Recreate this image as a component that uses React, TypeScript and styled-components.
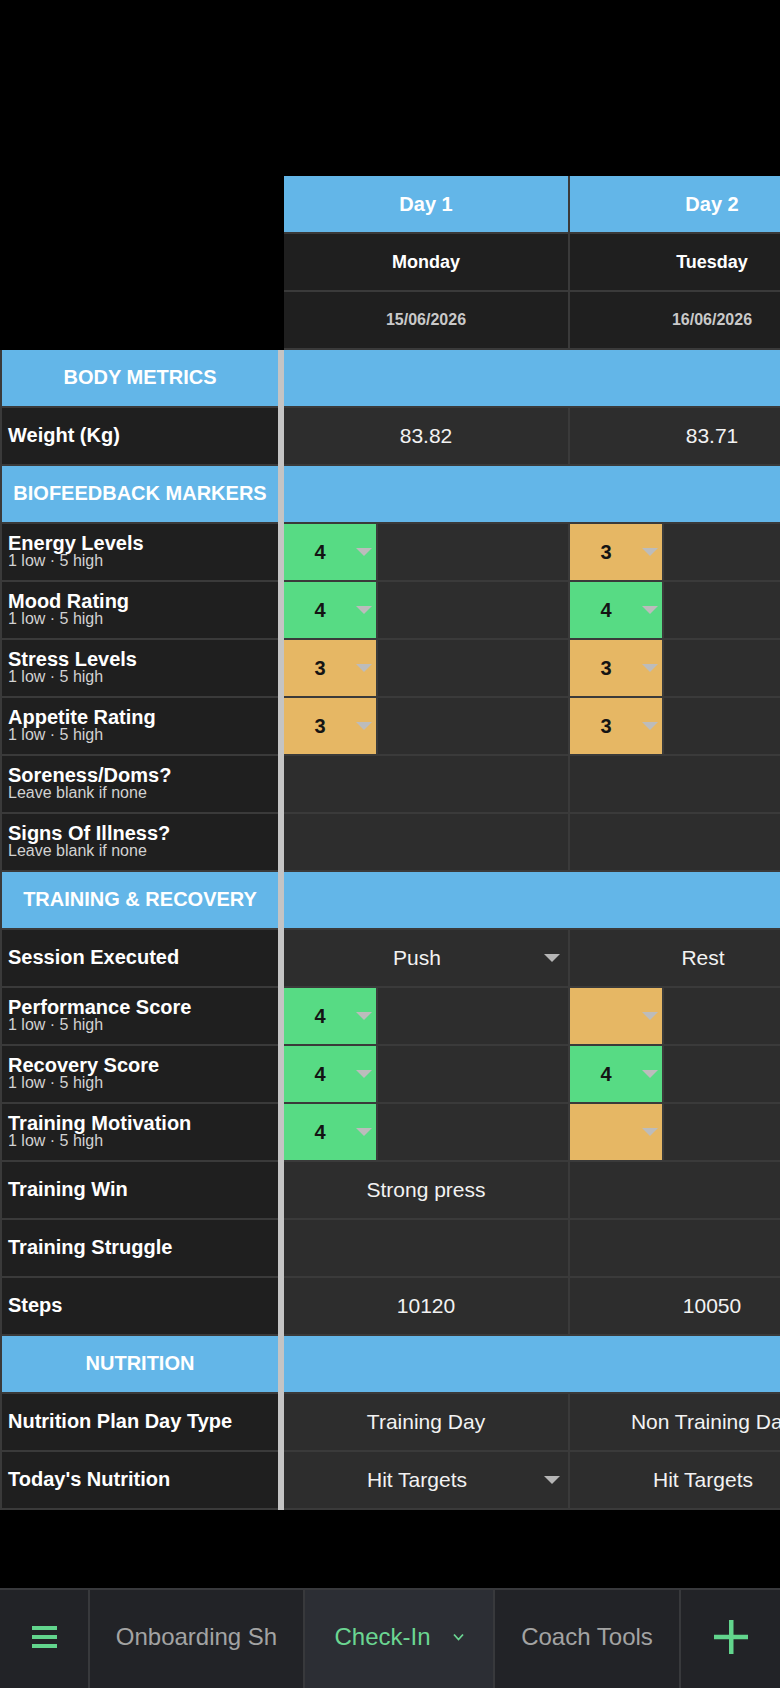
import React from "react";
import styled, { createGlobalStyle } from "styled-components";

const GlobalStyle = createGlobalStyle`
  html, body {
    margin: 0;
    padding: 0;
    background: #000;
  }
  body {
    font-family: "Liberation Sans", Arial, sans-serif;
    color: #fff;
  }
`;

const BLUE = "#63b6e8";
const LINE = "#3a3a3a";
const GREEN = "#57db84";
const ORANGE = "#e6b764";

const Page = styled.div`
  display: flex;
  flex-direction: column;
  height: 100vh;
  overflow: hidden;
  background: #000;
`;

const Sheet = styled.div`
  padding-top: 176px;
  overflow: hidden;
`;

const Row = styled.div`
  display: flex;
  width: max-content;
`;

const Corner = styled.div`
  width: 284px;
  height: 58px;
  background: #000;
`;

const LabelCell = styled.div<{ $section?: boolean }>`
  box-sizing: border-box;
  width: 278px;
  height: 58px;
  border-left: 2px solid ${LINE};
  border-bottom: 2px solid ${LINE};
  background: ${(p) => (p.$section ? BLUE : "#1f1f1f")};
  display: flex;
  flex-direction: column;
  justify-content: center;
  align-items: ${(p) => (p.$section ? "center" : "flex-start")};
  padding-left: ${(p) => (p.$section ? "0" : "6px")};
  padding-bottom: 2px;
`;

const SectionTitle = styled.span`
  font-size: 20px;
  font-weight: 700;
  letter-spacing: 0;
`;

const Title = styled.span`
  font-size: 20px;
  font-weight: 700;
  line-height: 1;
`;

const Hint = styled.span`
  font-size: 16px;
  line-height: 1;
  color: #d2d2d2;
`;

const Rail = styled.div`
  width: 6px;
  height: 58px;
  background: #c4c4c4;
`;

type Tone = "day" | "head" | "data";

const DayCell = styled.div<{ $tone: Tone }>`
  box-sizing: border-box;
  width: 286px;
  height: 58px;
  border-right: 2px solid ${LINE};
  border-bottom: 2px solid ${LINE};
  background: ${(p) =>
    p.$tone === "day" ? BLUE : p.$tone === "head" ? "#1f1f1f" : "#2d2d2d"};
  display: flex;
  align-items: center;
  justify-content: center;
  flex-shrink: 0;
`;

const SectionFill = styled.div<{ $days: number }>`
  box-sizing: border-box;
  width: ${(p) => p.$days * 286}px;
  height: 58px;
  border-bottom: 2px solid ${LINE};
  background: ${BLUE};
`;

const DayName = styled.span<{ $size: number; $muted?: boolean }>`
  font-size: ${(p) => p.$size}px;
  font-weight: 700;
  color: ${(p) => (p.$muted ? "#c9c9c9" : "#fff")};
`;

const Value = styled.span`
  font-size: 21px;
  color: #f2f2f2;
`;

const ChipWrap = styled.div`
  display: flex;
  align-self: stretch;
  width: 100%;
`;

const Chip = styled.div<{ $color: string }>`
  box-sizing: border-box;
  width: 94px;
  border-right: 2px solid ${LINE};
  background: ${(p) => p.$color};
  display: flex;
  align-items: center;
`;

const ChipValue = styled.span`
  width: 72px;
  text-align: center;
  font-size: 20px;
  font-weight: 700;
  color: #141414;
`;

const Caret = styled.span<{ $color?: string }>`
  width: 0;
  height: 0;
  border-left: 8px solid transparent;
  border-right: 8px solid transparent;
  border-top: 8px solid ${(p) => p.$color || "#bcbcbc"};
  flex-shrink: 0;
`;

const Select = styled.div`
  display: flex;
  align-items: center;
  width: 100%;
  padding: 0 8px 0 6px;
  box-sizing: border-box;
`;

const SelectText = styled.span`
  flex: 1;
  text-align: center;
  font-size: 21px;
  color: #f2f2f2;
  white-space: nowrap;
`;

const TabBar = styled.div`
  margin-top: auto;
  height: 100px;
  box-sizing: border-box;
  border-top: 2px solid #38393c;
  background: #222327;
  display: flex;
`;

const Tab = styled.div<{ $w: number; $active?: boolean; $last?: boolean }>`
  box-sizing: border-box;
  width: ${(p) => p.$w}px;
  flex-shrink: 0;
  border-right: ${(p) => (p.$last ? "none" : "2px solid #38393c")};
  background: ${(p) => (p.$active ? "#2c2e34" : "transparent")};
  display: flex;
  align-items: center;
  justify-content: center;
  gap: 22px;
  padding-bottom: 4px;
  font-size: 24px;
  color: ${(p) => (p.$active ? "#6bd692" : "#a3a3a3")};
  white-space: nowrap;
  overflow: hidden;
`;

const Burger = styled.div`
  display: flex;
  flex-direction: column;
  gap: 5px;
  span {
    display: block;
    width: 25px;
    height: 4px;
    background: #62d58d;
  }
`;

type Cell =
  | { kind: "empty" }
  | { kind: "text"; value: string }
  | { kind: "chip"; color: "green" | "orange"; value?: string }
  | { kind: "select"; value: string };

type Line =
  | { type: "section"; title: string }
  | { type: "field"; title: string; hint?: string; cells: Cell[] };

const E: Cell = { kind: "empty" };
const g = (v?: string): Cell => ({ kind: "chip", color: "green", value: v });
const o = (v?: string): Cell => ({ kind: "chip", color: "orange", value: v });
const t = (v: string): Cell => ({ kind: "text", value: v });
const s = (v: string): Cell => ({ kind: "select", value: v });

const SCALE = "1 low · 5 high";
const BLANK = "Leave blank if none";

const days = [
  { day: "Day 1", name: "Monday", date: "15/06/2026" },
  { day: "Day 2", name: "Tuesday", date: "16/06/2026" },
];

const lines: Line[] = [
  { type: "section", title: "BODY METRICS" },
  { type: "field", title: "Weight (Kg)", cells: [t("83.82"), t("83.71")] },
  { type: "section", title: "BIOFEEDBACK MARKERS" },
  { type: "field", title: "Energy Levels", hint: SCALE, cells: [g("4"), o("3")] },
  { type: "field", title: "Mood Rating", hint: SCALE, cells: [g("4"), g("4")] },
  { type: "field", title: "Stress Levels", hint: SCALE, cells: [o("3"), o("3")] },
  { type: "field", title: "Appetite Rating", hint: SCALE, cells: [o("3"), o("3")] },
  { type: "field", title: "Soreness/Doms?", hint: BLANK, cells: [E, E] },
  { type: "field", title: "Signs Of Illness?", hint: BLANK, cells: [E, E] },
  { type: "section", title: "TRAINING & RECOVERY" },
  { type: "field", title: "Session Executed", cells: [s("Push"), s("Rest")] },
  { type: "field", title: "Performance Score", hint: SCALE, cells: [g("4"), o()] },
  { type: "field", title: "Recovery Score", hint: SCALE, cells: [g("4"), g("4")] },
  { type: "field", title: "Training Motivation", hint: SCALE, cells: [g("4"), o()] },
  { type: "field", title: "Training Win", cells: [t("Strong press"), E] },
  { type: "field", title: "Training Struggle", cells: [E, E] },
  { type: "field", title: "Steps", cells: [t("10120"), t("10050")] },
  { type: "section", title: "NUTRITION" },
  {
    type: "field",
    title: "Nutrition Plan Day Type",
    cells: [t("Training Day"), t("Non Training Day")],
  },
  {
    type: "field",
    title: "Today's Nutrition",
    cells: [s("Hit Targets"), s("Hit Targets")],
  },
];

const renderCell = (cell: Cell) => {
  switch (cell.kind) {
    case "text":
      return <Value>{cell.value}</Value>;
    case "chip":
      return (
        <ChipWrap>
          <Chip $color={cell.color === "green" ? GREEN : ORANGE}>
            <ChipValue>{cell.value}</ChipValue>
            <Caret />
          </Chip>
        </ChipWrap>
      );
    case "select":
      return (
        <Select>
          <SelectText>{cell.value}</SelectText>
          <Caret $color="#b5b5b5" />
        </Select>
      );
    default:
      return null;
  }
};

const App: React.FC = () => {
  return (
    <Page>
      <GlobalStyle />
      <Sheet>
        <Row>
          <Corner />
          {days.map((d) => (
            <DayCell key={d.day} $tone="day">
              <DayName $size={20}>{d.day}</DayName>
            </DayCell>
          ))}
        </Row>
        <Row>
          <Corner />
          {days.map((d) => (
            <DayCell key={d.name} $tone="head">
              <DayName $size={18}>{d.name}</DayName>
            </DayCell>
          ))}
        </Row>
        <Row>
          <Corner />
          {days.map((d) => (
            <DayCell key={d.date} $tone="head">
              <DayName $size={16} $muted>
                {d.date}
              </DayName>
            </DayCell>
          ))}
        </Row>
        {lines.map((line) =>
          line.type === "section" ? (
            <Row key={line.title}>
              <LabelCell $section>
                <SectionTitle>{line.title}</SectionTitle>
              </LabelCell>
              <Rail />
              <SectionFill $days={days.length} />
            </Row>
          ) : (
            <Row key={line.title}>
              <LabelCell>
                <Title>{line.title}</Title>
                {line.hint && <Hint>{line.hint}</Hint>}
              </LabelCell>
              <Rail />
              {line.cells.map((cell, i) => (
                <DayCell key={i} $tone="data">
                  {renderCell(cell)}
                </DayCell>
              ))}
            </Row>
          )
        )}
      </Sheet>
      <TabBar>
        <Tab $w={90}>
          <Burger>
            <span />
            <span />
            <span />
          </Burger>
        </Tab>
        <Tab $w={215}>Onboarding Sh</Tab>
        <Tab $w={190} $active>
          <span>Check-In</span>
          <svg width="11" height="8" viewBox="0 0 11 8" fill="none">
            <path d="M1 1.5 L5.5 6.5 L10 1.5" stroke="#6bd692" strokeWidth="1.8" />
          </svg>
        </Tab>
        <Tab $w={186}>Coach Tools</Tab>
        <Tab $w={99} $last>
          <svg width="34" height="34" viewBox="0 0 34 34">
            <rect x="15" y="0" width="4.5" height="34" fill="#62d58d" />
            <rect x="0" y="14.75" width="34" height="4.5" fill="#62d58d" />
          </svg>
        </Tab>
      </TabBar>
    </Page>
  );
};

export default App;
